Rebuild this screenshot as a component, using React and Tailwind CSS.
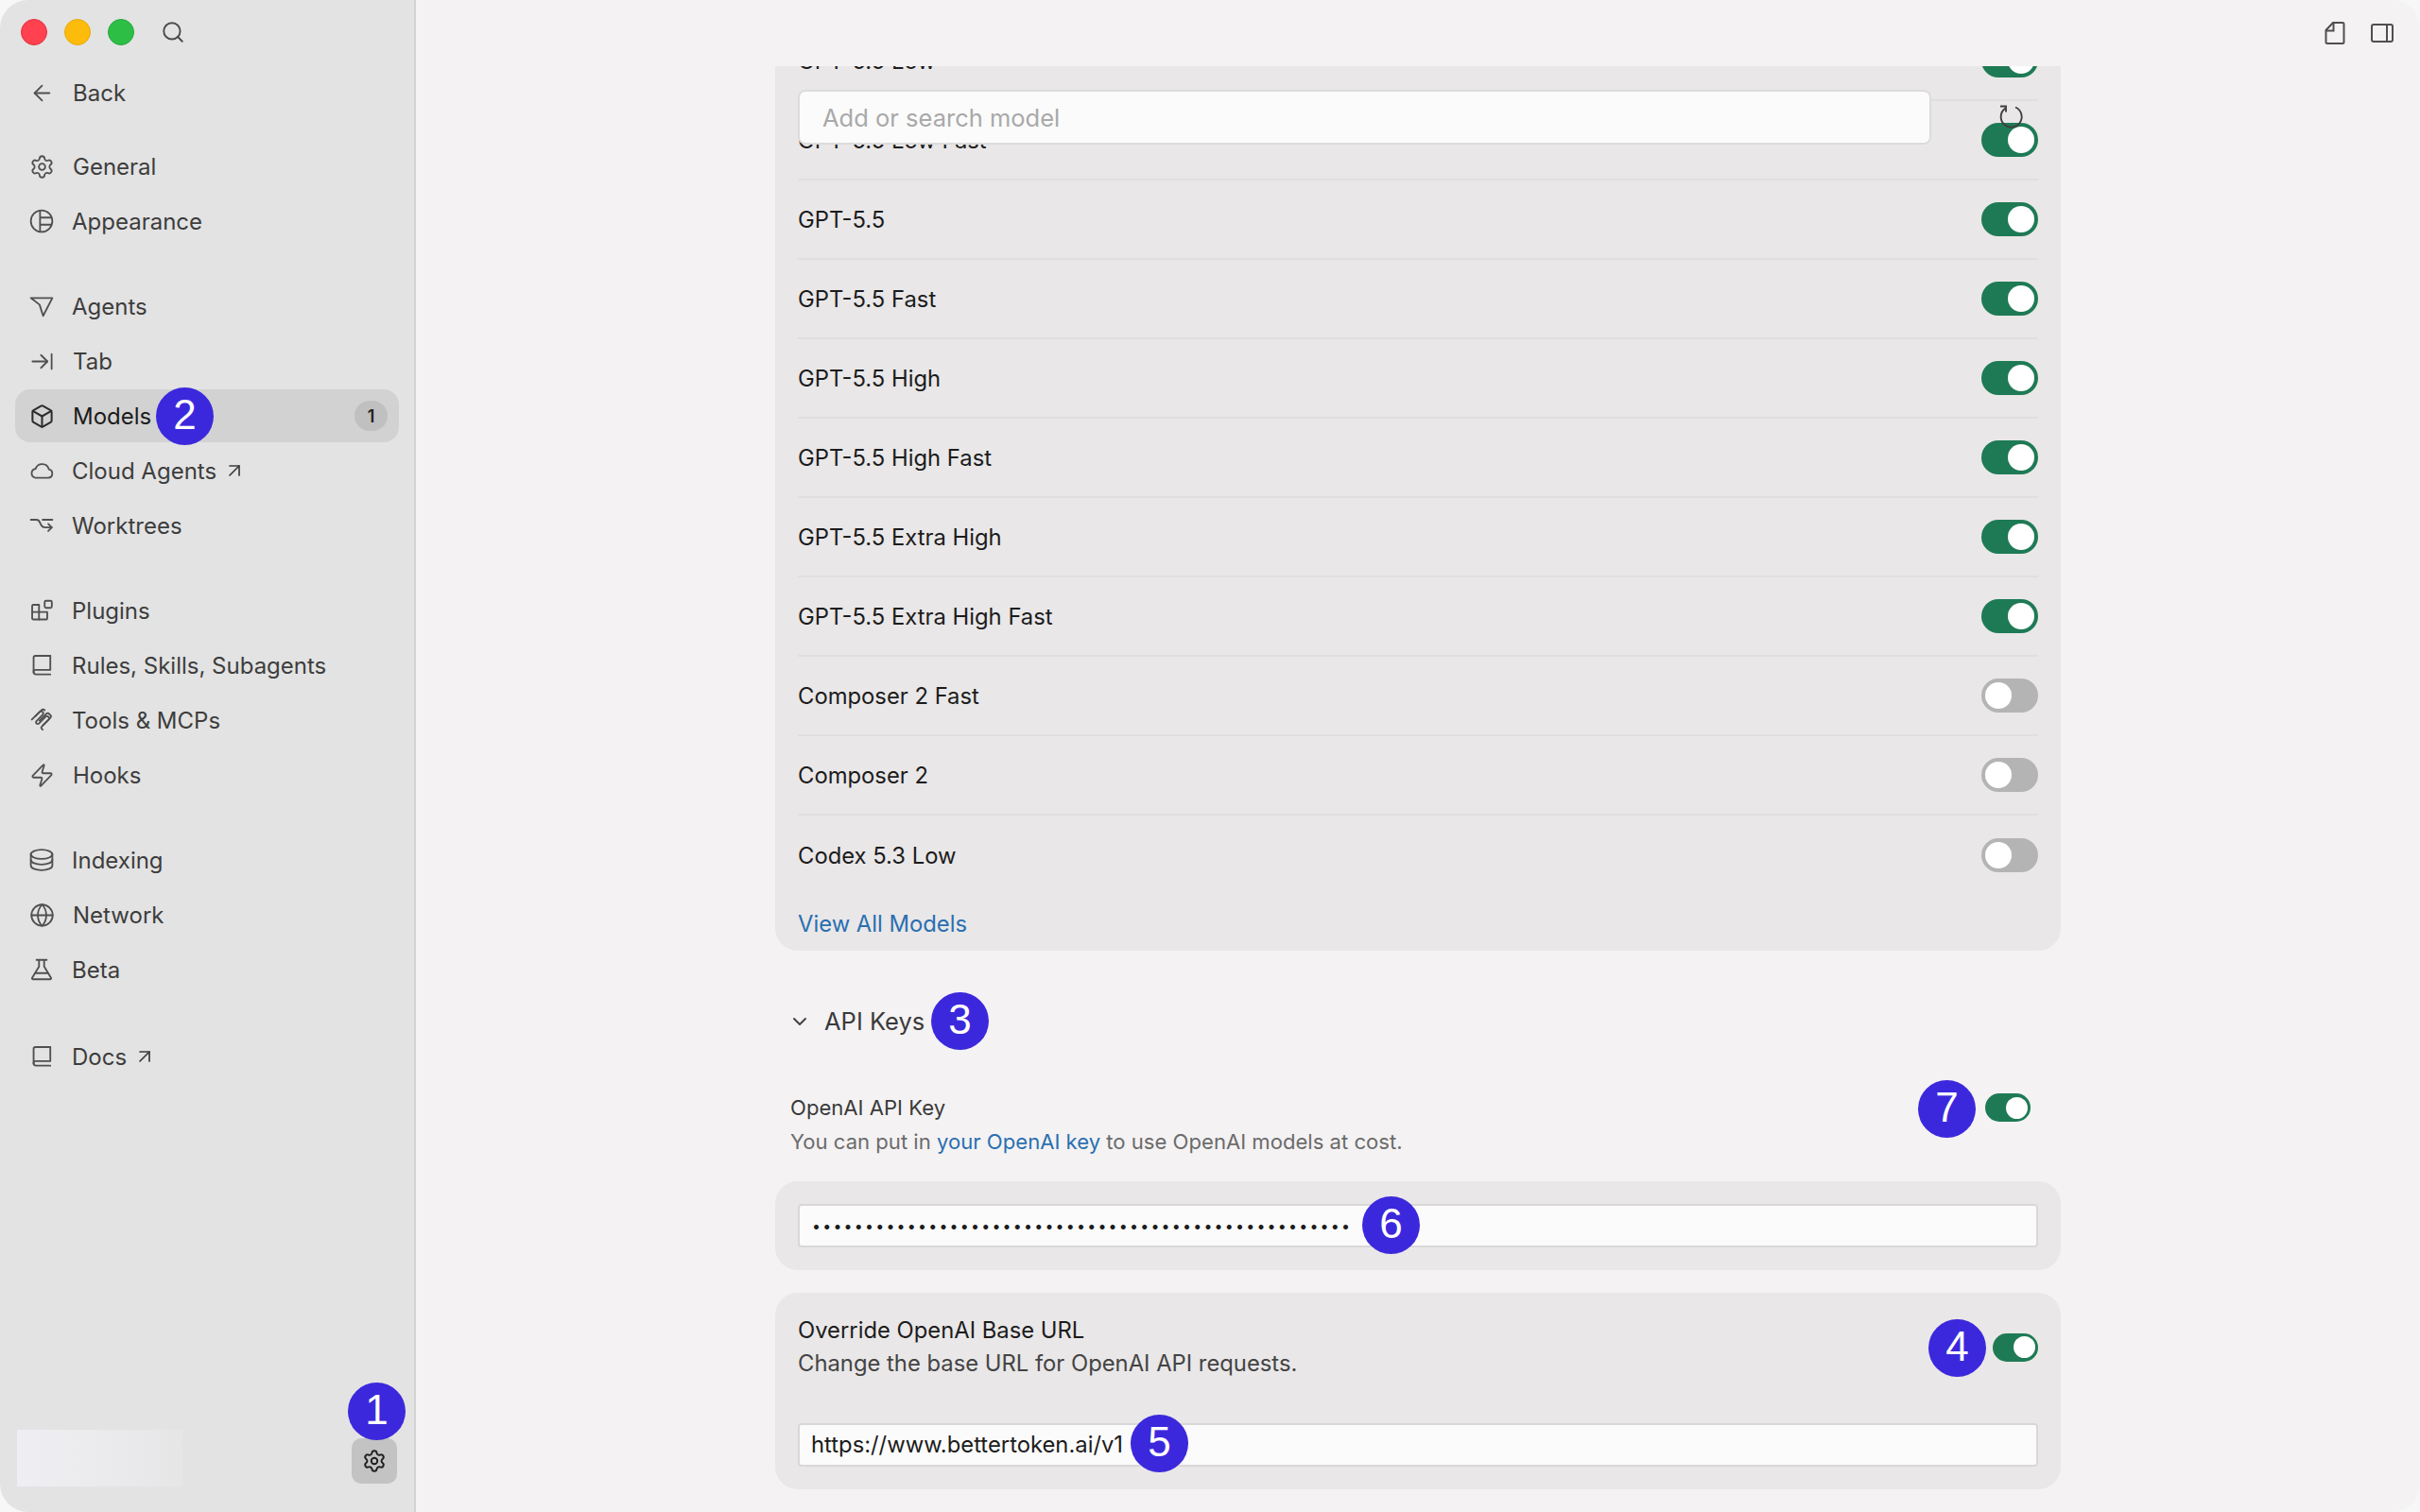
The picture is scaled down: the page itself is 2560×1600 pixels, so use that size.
import {
  ArrowLeft,
  ArrowRightToLine,
  ArrowUpRight,
  Box,
  ChevronDown,
  Globe,
  Search,
  Settings,
  Zap,
} from "lucide-react";

const Svg = ({ children, className = "h-[26px] w-[26px]" }) => (
  <svg
    viewBox="0 0 24 24"
    fill="none"
    stroke="currentColor"
    strokeWidth="1.7"
    strokeLinecap="round"
    strokeLinejoin="round"
    className={className}
  >
    {children}
  </svg>
);

const AppearanceIcon = () => (
  <Svg>
    <circle cx="12" cy="12" r="10.5" />
    <path d="M10.5 1.8v20.4M10.5 8.5h11M10.5 15.5h11" />
  </Svg>
);
const AgentsIcon = () => (
  <Svg>
    <path d="M1.5 4h21L13.5 21.5 10 10.5z" />
  </Svg>
);
const CloudIcon = () => (
  <Svg>
    <path d="M6 19h12.5a4.2 4.2 0 0 0 .6-8.3 6.8 6.8 0 0 0-13-.4A4.4 4.4 0 0 0 6 19z" />
  </Svg>
);
const WorktreesIcon = () => (
  <Svg>
    <path d="M1.5 6.5h5.5c1.6 0 2.6 1 3.3 2.5l1 2.2c.8 1.7 2 2.8 4 2.8h6.5" />
    <path d="M18.5 10.5l3.5 3.5-3.5 3.5" />
    <path d="M13 6.5h9.5" />
  </Svg>
);
const PluginsIcon = () => (
  <Svg>
    <path d="M3.8 6.5h5.7v7h8v6.3a1 1 0 0 1-1 1H3.8a1 1 0 0 1-1-1V7.5a1 1 0 0 1 1-1z" />
    <path d="M2.8 13.5h6.7v7.3" />
    <rect x="15" y="2.5" width="7" height="7" rx="1.4" />
  </Svg>
);
const BookIcon = () => (
  <Svg>
    <path d="M20.5 2.8H6a1.8 1.8 0 0 0-1.8 1.8v14.6" />
    <path d="M20.5 2.8v13.7H6a1.8 1.8 0 0 0-1.8 1.8c0 1.6.9 2.6 2.3 2.6h14" />
  </Svg>
);
const ToolsIcon = () => (
  <Svg>
    <path d="M2.5 11.5L10 4a2 2 0 0 1 3 0 2 2 0 0 1 0 2.8L7 13a1.6 1.6 0 0 0 2.4 2.3l6.4-6.4a2 2 0 0 1 3 0 2 2 0 0 1 0 2.8l-6.6 6.6a1.6 1.6 0 0 0 0 2.2l.8.8" />
    <path d="M6 8.2l6-6a2 2 0 0 1 3 .2M10 12.5l6.5-6.5a2 2 0 0 1 3 0l1 1a2 2 0 0 1 0 2.8l-7.2 7.2" />
  </Svg>
);
const IndexingIcon = () => (
  <Svg>
    <ellipse cx="12" cy="6.5" rx="10.5" ry="4.5" />
    <path d="M1.5 6.5v11c0 2.5 4.7 4.5 10.5 4.5s10.5-2 10.5-4.5v-11" />
    <path d="M1.5 12c0 2.5 4.7 4.5 10.5 4.5s10.5-2 10.5-4.5" />
  </Svg>
);
const BetaIcon = () => (
  <Svg>
    <path d="M7 2.5h10M9.5 2.5v6.5L2.8 20a1 1 0 0 0 .9 1.5h16.6a1 1 0 0 0 .9-1.5L14.5 9V2.5" />
    <path d="M6 15.5h12" />
  </Svg>
);

const lucideSize = "h-[27px] w-[27px]";

const groups = [
  [
    { label: "General", icon: <Settings className={lucideSize} strokeWidth={1.6} /> },
    { label: "Appearance", icon: <AppearanceIcon /> },
  ],
  [
    { label: "Agents", icon: <AgentsIcon /> },
    { label: "Tab", icon: <ArrowRightToLine className={lucideSize} strokeWidth={1.6} /> },
    { label: "Models", icon: <Box className={lucideSize} strokeWidth={1.8} />, active: true },
    { label: "Cloud Agents", icon: <CloudIcon />, external: true },
    { label: "Worktrees", icon: <WorktreesIcon /> },
  ],
  [
    { label: "Plugins", icon: <PluginsIcon /> },
    { label: "Rules, Skills, Subagents", icon: <BookIcon /> },
    { label: "Tools & MCPs", icon: <ToolsIcon /> },
    { label: "Hooks", icon: <Zap className={lucideSize} strokeWidth={1.6} /> },
  ],
  [
    { label: "Indexing", icon: <IndexingIcon /> },
    { label: "Network", icon: <Globe className={lucideSize} strokeWidth={1.6} /> },
    { label: "Beta", icon: <BetaIcon /> },
  ],
  [{ label: "Docs", icon: <BookIcon />, external: true }],
];

const models = [
  { name: "GPT-5.5 Low", on: true },
  { name: "GPT-5.5 Low Fast", on: true },
  { name: "GPT-5.5", on: true },
  { name: "GPT-5.5 Fast", on: true },
  { name: "GPT-5.5 High", on: true },
  { name: "GPT-5.5 High Fast", on: true },
  { name: "GPT-5.5 Extra High", on: true },
  { name: "GPT-5.5 Extra High Fast", on: true },
  { name: "Composer 2 Fast", on: false },
  { name: "Composer 2", on: false },
  { name: "Codex 5.3 Low", on: false },
];

function Badge({ n, className }) {
  return (
    <div
      className={`absolute z-20 flex h-[61px] w-[61px] items-center justify-center rounded-full bg-[#3c28dc] pb-[3px] font-['Liberation_Sans',sans-serif] text-[44px] leading-none text-white ${className}`}
    >
      {n}
    </div>
  );
}

function Toggle({ on }) {
  return (
    <div
      className={`flex h-9 w-[60px] items-center rounded-full px-1 ${
        on ? "justify-end bg-[#1e7a55]" : "justify-start bg-[#b4b4b4]"
      }`}
    >
      <div className="h-7 w-7 rounded-full bg-white" />
    </div>
  );
}

function SmallToggle() {
  return (
    <div className="flex h-[30px] w-12 items-center justify-end rounded-full bg-[#1e7a55] px-[3px]">
      <div className="h-[23px] w-[23px] rounded-full bg-white" />
    </div>
  );
}

function NavRow({ item }) {
  return (
    <div
      className={`relative flex h-14 items-center gap-[19px] rounded-2xl pl-[15px] pr-3 ${
        item.active ? "bg-[#d2d2d2] text-[#1c1c1c]" : "text-[#3d3d3d]"
      }`}
    >
      <span className={item.active ? "text-[#2c2c2c]" : "text-[#505050]"}>{item.icon}</span>
      <span className="pt-[2px] text-[24px]">{item.label}</span>
      {item.external && <ArrowUpRight className="-ml-[12px] h-6 w-6" strokeWidth={1.7} />}
      {item.active && (
        <>
          <Badge n="2" className="left-[149px] top-[-2px]" />
          <span className="ml-auto flex h-8 w-[35px] items-center justify-center rounded-full bg-[#bfc0bf] text-[18px] font-semibold text-[#222]">
            1
          </span>
        </>
      )}
    </div>
  );
}

function Sidebar() {
  return (
    <aside className="relative flex h-full w-[440px] shrink-0 flex-col border-r-2 border-[#d2d2d2] bg-[#e3e3e3] px-4">
      <div className="flex h-[68px] items-center gap-[18px] pl-[6px]">
        <span className="h-7 w-7 rounded-full border border-[#e5303c] bg-[#ff4150]" />
        <span className="h-7 w-7 rounded-full border border-[#e8a90a] bg-[#fdbb0b]" />
        <span className="h-7 w-7 rounded-full border border-[#22a83a] bg-[#2dbf45]" />
        <Search className="ml-[10px] h-[26px] w-[26px] text-[#4c4c4c]" strokeWidth={1.8} />
      </div>

      <div className="mt-[2px] flex h-14 items-center gap-[19px] pl-[15px] text-[#3d3d3d]">
        <ArrowLeft className={`${lucideSize} text-[#505050]`} strokeWidth={1.6} />
        <span className="pt-[2px] text-[24px]">Back</span>
      </div>

      <nav className="mt-[22px] flex flex-col gap-[34px]">
        {groups.map((group, i) => (
          <div key={i} className={`flex flex-col gap-[2px] ${i === 4 ? "mt-[2px]" : ""}`}>
            {group.map((item) => (
              <NavRow key={item.label} item={item} />
            ))}
          </div>
        ))}
      </nav>

      {/* blurred account block + settings button */}
      <div className="mt-auto mb-[30px] flex items-end justify-between pl-[2px] pr-[2px]">
        <div className="-mb-[3px] h-[60px] w-[175px] bg-gradient-to-r from-[#efeef2] to-[#e7e6e7]" />
        <div className="flex h-12 w-12 items-center justify-center rounded-[10px] bg-[#c2c3c2] text-[#1f1f1f]">
          <Settings className="h-[26px] w-[26px]" strokeWidth={1.8} />
        </div>
      </div>
      <Badge n="1" className="left-[368px] top-[1463px]" />
    </aside>
  );
}

function ModelsCard() {
  return (
    <section className="relative overflow-hidden rounded-b-3xl bg-[#e9e7e8] px-6">
      <div className="-mt-[47px]">
        {models.map((m, i) => (
          <div
            key={m.name}
            className={`flex h-[84px] items-center justify-between text-[23.8px] text-[#1c1c1c] ${
              i < models.length - 1 ? "border-b-2 border-[#e0dfdf]" : ""
            }`}
          >
            <span className="pt-[2px]">{m.name}</span>
            <Toggle on={m.on} />
          </div>
        ))}
      </div>
      <div className="flex h-[59px] items-start pt-[13px] text-[23.8px] leading-[36px] text-[#2a6fb0]">
        View All Models
      </div>

      {/* sticky search over the list */}
      <input
        readOnly
        placeholder="Add or search model"
        className="absolute left-6 top-[25px] h-[58px] w-[1199px] rounded-lg border-2 border-[#dcdcdc] bg-[#fbfbfb] px-6 text-[25.5px] outline-none placeholder:text-[#a9a9a9]"
      />
      <svg
        viewBox="0 0 26 26"
        fill="none"
        stroke="#3f3f3f"
        strokeWidth="1.9"
        className="absolute left-[1295px] top-[41px] h-[26px] w-[26px]"
      >
        <path d="M6.5 3.5A11 11 0 1 0 17 2.5" />
        <path d="M1 1.5h6v6" />
      </svg>
    </section>
  );
}

function ApiKeys() {
  return (
    <>
      <div className="relative mt-[50px] flex h-[50px] items-center pl-4 text-[#3a3a3a]">
        <ChevronDown className="-ml-[2px] h-6 w-6 text-[#444]" strokeWidth={2} />
        <span className="ml-[14px] text-[25.5px]">API Keys</span>
        <Badge n="3" className="left-[165px] top-[-6px]" />
      </div>

      <div className="relative mt-[49px] flex items-start justify-between pl-4 pr-8">
        <div>
          <div className="text-[22.1px] leading-[34px] text-[#3a3a3a]">OpenAI API Key</div>
          <div className="mt-[2px] text-[22.1px] leading-[34px] text-[#6b6b6b]">
            You can put in <span className="text-[#2a6fb0]">your OpenAI key</span> to use OpenAI
            models at cost.
          </div>
        </div>
        <div className="mt-[2px]">
          <SmallToggle />
        </div>
        <Badge n="7" className="left-[1209px] top-[-12px]" />
      </div>

      <section className="mt-[25px] rounded-3xl bg-[#e9e7e8] p-6">
        <div className="relative flex h-[46px] items-center rounded border-2 border-[#d8d8d8] bg-[#fbfbfb] pl-[13px]">
          <span className="text-[16px] leading-none tracking-[2.2px] text-[#1c1c1c]">
            {"•".repeat(51)}
          </span>
          <Badge n="6" className="left-[595px] top-[-10px]" />
        </div>
      </section>

      <section className="relative mt-6 rounded-3xl bg-[#e9e7e8] px-6 pb-6 pt-[23px]">
        <div className="flex items-center justify-between">
          <div>
            <div className="text-[23.8px] leading-[34px] text-[#1c1c1c]">Override OpenAI Base URL</div>
            <div className="mt-[1px] text-[23.8px] leading-[34px] text-[#444]">
              Change the base URL for OpenAI API requests.
            </div>
          </div>
          <SmallToggle />
        </div>
        <div className="relative mt-[46px] flex h-[46px] items-center rounded border-2 border-[#d8d8d8] bg-[#fbfbfb] pl-3 text-[23.8px] text-[#1c1c1c]">
          https://www.bettertoken.ai/v1
          <Badge n="5" className="left-[350px] top-[-11px]" />
        </div>
        <Badge n="4" className="left-[1220px] top-[28px]" />
      </section>
    </>
  );
}

export default function App() {
  return (
    <div className="h-[1600px] w-[2560px] overflow-hidden bg-[#f7f7f7] font-['Inter',sans-serif] antialiased">
      <div className="flex h-full overflow-hidden rounded-[30px]">
        <Sidebar />
        <main className="relative flex-1 bg-[#f4f2f3]">
          <div className="absolute right-[28px] top-[22px] flex items-center gap-[27px] text-[#4f4f4f]">
            <svg viewBox="0 0 22 26" fill="none" stroke="currentColor" strokeWidth="2" className="h-[26px] w-[22px]">
              <path d="M9 2h10a1.5 1.5 0 0 1 1.5 1.5v19a1.5 1.5 0 0 1-1.5 1.5H3a1.5 1.5 0 0 1-1.5-1.5V10z" />
              <path d="M9.5 2.5V10.5H2" />
            </svg>
            <svg viewBox="0 0 24 20" fill="none" stroke="currentColor" strokeWidth="2" className="h-5 w-6">
              <rect x="1" y="1" width="22" height="18" rx="2" />
              <path d="M17 1v18" />
            </svg>
          </div>
          <div className="mx-auto w-[1360px] pt-[70px]">
            <ModelsCard />
            <ApiKeys />
          </div>
        </main>
      </div>
    </div>
  );
}
